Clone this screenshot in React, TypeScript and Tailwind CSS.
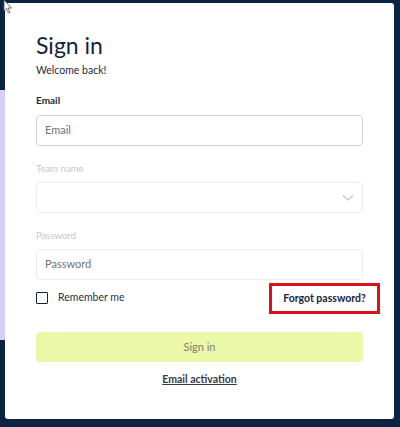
import React from "react";

export default function App() {
  return (
    <div className="relative w-[400px] h-[427px] bg-[#0d2344] overflow-hidden" style={{ fontFamily: "Lato, 'Noto Sans', sans-serif" }}>
      <div className="absolute left-0 top-[90px] w-[8px] h-[250px] bg-[#d9cdfb]" />
      <div className="absolute left-[5px] top-[3px] w-[389px] h-[416px] bg-white rounded-[3px] pl-[31px] pr-[31px] pt-[27px]">
        <h1 className="text-[23px] leading-[30px] text-[#14233f] font-normal">Sign in</h1>
        <p className="mt-[2px] text-[10.5px] leading-[16px] text-[#1f2a3c]">Welcome back!</p>
        <label className="block mt-[15px] text-[10px] leading-[14px] font-bold text-[#1f2a3c]">Email</label>
        <div className="mt-[8px] h-[31px] border border-[#cfd2d6] rounded-[4px] flex items-center px-[8px] text-[11px] text-[#6b7280]">Email</div>
        <label className="block mt-[16px] text-[9.5px] leading-[14px] text-[#c4c7cc]">Team name</label>
        <div className="mt-[6px] h-[31px] border border-[#ececee] rounded-[4px] flex items-center justify-end pr-[8px]">
          <svg width="12" height="8" viewBox="0 0 12 8"><path d="M1 1.5 L6 6 L11 1.5" fill="none" stroke="#c4c7cc" strokeWidth="1.3" /></svg>
        </div>
        <label className="block mt-[16px] text-[9.5px] leading-[14px] text-[#c4c7cc]">Password</label>
        <div className="mt-[6px] h-[31px] border border-[#ececee] rounded-[4px] flex items-center px-[8px] text-[11px] text-[#6b7280]">Password</div>
        <div className="relative mt-[3px] h-[31px] flex items-center">
          <div className="flex items-center gap-[10px] -mt-[2px]">
            <div className="w-[12px] h-[12px] border-[1.5px] border-[#14233f] rounded-[1px]" />
            <span className="text-[10.5px] text-[#2a3444]">Remember me</span>
          </div>
          <div className="absolute right-[-17px] top-0 w-[111px] h-[31px] border-[3px] border-[#d8121b] flex items-center justify-center text-[10.5px] font-bold text-[#14233f]">
            Forgot password?
          </div>
        </div>
        <div className="mt-[18px] h-[30px] rounded-[4px] bg-[#eaf8a7] flex items-center justify-center text-[11px] text-[#7a8270]">Sign in</div>
        <div className="mt-[10px] text-center text-[10.5px] leading-[15px] font-bold text-[#333a45] underline">Email activation</div>
      </div>
      <svg className="absolute left-[3px] top-0" width="12" height="16" viewBox="0 0 12 16">
        <path d="M1 0 L1 11 L3.5 8.5 L5.5 13 L7 12.3 L5 8 L8.5 8 Z" fill="white" stroke="#555" strokeWidth="0.8" />
      </svg>
    </div>
  );
}
